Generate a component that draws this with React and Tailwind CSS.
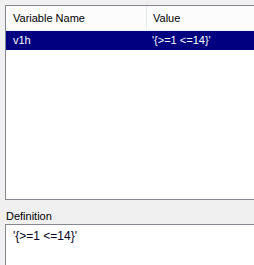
import React from "react";

const rows = [{ name: "v1h", value: "'{>=1 <=14}'" }];

export default function App() {
  return (
    <div
      className="w-[254px] h-[265px] overflow-hidden bg-[#f0f0f0] pl-[5px] pt-[5px] text-[11px] text-black"
      style={{ fontFamily: '"Liberation Sans", Arial, sans-serif' }}
    >
      {/* variable list */}
      <div className="w-[260px] h-[195px] border border-[#828790] bg-white">
        <div className="flex h-[25px] bg-[#fcfcfc] border-b border-[#f0f0f0] leading-[24px]">
          <div className="w-[141px] pl-[7px] border-r border-[#e3ebf5]">Variable Name</div>
          <div className="pl-[6px]">Value</div>
        </div>
        {rows.map((r) => (
          <div key={r.name} className="flex h-[19px] bg-[#000080] text-white leading-[18px]">
            <div className="w-[141px] pl-[7px]">{r.name}</div>
            <div className="pl-[5px]">{r.value}</div>
          </div>
        ))}
      </div>

      {/* definition */}
      <div className="pl-px pt-[10px] h-[24px] leading-[13px]">Definition</div>
      <div className="w-[260px] h-[50px] border-l border-t border-[#828790] bg-white pl-[7px] pt-[4px] text-[12px] leading-[14px] text-[#000020]">
        '{"{"}&gt;=1 &lt;=14{"}"}'
      </div>
    </div>
  );
}
